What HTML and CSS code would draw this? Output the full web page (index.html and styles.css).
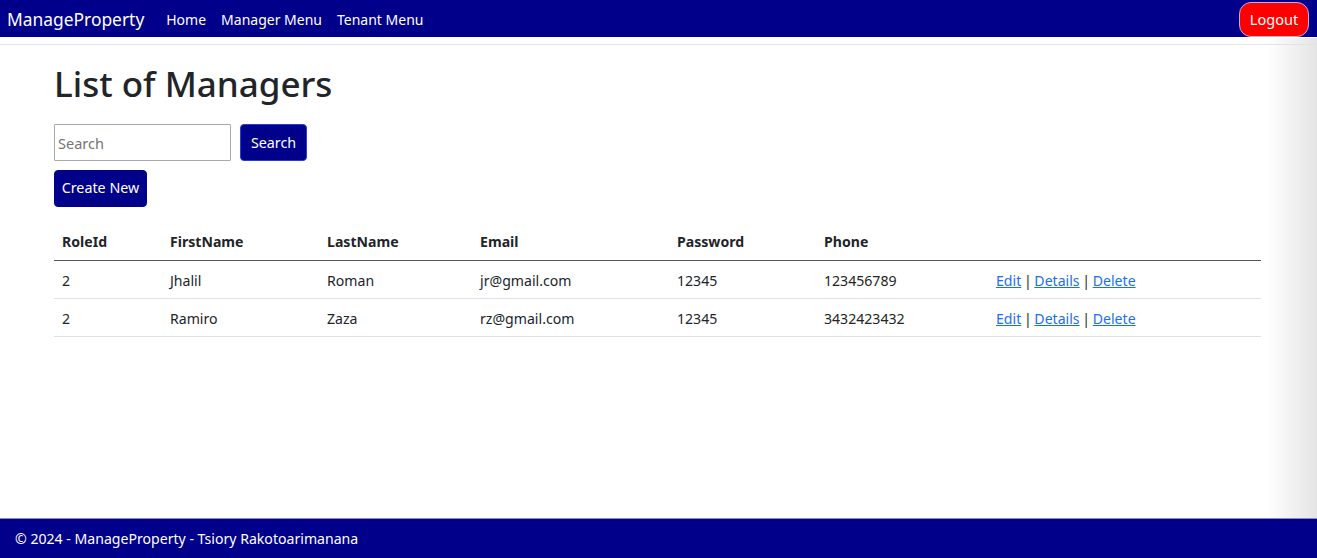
FILE: index.html
```html
<!DOCTYPE html>
<html lang="en">
<head>
<meta charset="utf-8">
<title>List of Managers - ManageProperty</title>
<link rel="stylesheet" href="styles.css">
</head>
<body>
<header class="site-header">
  <nav class="navbar">
    <a class="brand" href="#">ManageProperty</a>
    <ul class="nav-links">
      <li><a href="#">Home</a></li>
      <li><a href="#">Manager Menu</a></li>
      <li><a href="#">Tenant Menu</a></li>
    </ul>
    <button class="btn-logout" type="button">Logout</button>
  </nav>
</header>

<main class="container">
  <h1 class="title">List of Managers</h1>
  <form class="search-form">
    <input class="search-input" type="text" placeholder="Search">
    <button class="btn btn-search" type="button">Search</button>
  </form>
  <p class="create-row"><a class="btn btn-create" href="#">Create New</a></p>

  <table class="table">
    <thead>
      <tr>
        <th class="c-role">RoleId</th>
        <th class="c-first">FirstName</th>
        <th class="c-last">LastName</th>
        <th class="c-email">Email</th>
        <th class="c-pass">Password</th>
        <th class="c-phone">Phone</th>
        <th></th>
      </tr>
    </thead>
    <tbody>
      <tr>
        <td>2</td>
        <td>Jhalil</td>
        <td>Roman</td>
        <td>jr@gmail.com</td>
        <td>12345</td>
        <td>123456789</td>
        <td class="actions"><a href="#">Edit</a> | <a href="#">Details</a> | <a href="#">Delete</a></td>
      </tr>
      <tr>
        <td>2</td>
        <td>Ramiro</td>
        <td>Zaza</td>
        <td>rz@gmail.com</td>
        <td>12345</td>
        <td>3432423432</td>
        <td class="actions"><a href="#">Edit</a> | <a href="#">Details</a> | <a href="#">Delete</a></td>
      </tr>
    </tbody>
  </table>
</main>

<footer class="footer">
  &copy; 2024 - ManageProperty - Tsiory Rakotoarimanana
</footer>
<div class="edge-shadow"></div>
</body>
</html>
```

FILE: styles.css
```css
* { box-sizing: border-box; }

html, body {
  margin: 0;
  height: 100%;
}

body {
  font-family: "Noto Sans", "Open Sans", sans-serif;
  font-size: 14.1px;
  color: #212529;
  background: #fff;
  display: flex;
  flex-direction: column;
  min-height: 558px;
}

.site-header {
  border-bottom: 1px solid #e5e5e5;
  padding-bottom: 7px;
}

.navbar {
  height: 37px;
  background: #00008b;
  display: flex;
  align-items: center;
  padding: 1px 8px 0 7px;
}

.brand {
  color: #fff;
  text-decoration: none;
  font-size: 17.4px;
  margin-right: 22px;
}

.nav-links {
  list-style: none;
  display: flex;
  gap: 15px;
  margin: 0;
  padding: 0;
  flex: 1;
}

.nav-links a {
  color: #fff;
  text-decoration: none;
  font-size: 14px;
}

.btn-logout {
  background: #ff0000;
  color: #fff;
  border: 1px solid #b9b0e0;
  border-radius: 12px;
  height: 35px;
  width: 70px;
  font-family: inherit;
  font-size: 14.5px;
  padding: 0;
  margin-top: 0;
}

.container {
  flex: 1;
  padding: 0 56px 0 54px;
}

.title {
  font-size: 35px;
  font-weight: 500;
  margin: 18px 0 19px;
  line-height: 1.2;
}

.search-form {
  display: flex;
  gap: 9px;
  margin: 0;
}

.search-input {
  width: 177px;
  height: 37px;
  border: 1px solid #a9a9a9;
  border-radius: 1px;
  font-family: inherit;
  font-size: 14.5px;
  padding: 0 3px;
  color: #212529;
}

.search-input::placeholder { color: #757575; }

.btn {
  display: inline-flex;
  align-items: center;
  justify-content: center;
  background: #00008b;
  color: #fff;
  text-decoration: none;
  font-family: inherit;
  font-size: 14.3px;
  border-radius: 4px;
  height: 37px;
}

.btn-search {
  width: 67px;
  border: 1px solid #1e3fd8;
  padding: 0;
}

.create-row {
  margin: 9px 0 16px;
}

.btn-create {
  width: 93px;
  border: 1px solid #00008b;
  padding-bottom: 3px;
}

.table {
  width: 100%;
  border-collapse: collapse;
}

.table th,
.table td {
  text-align: left;
  padding: 0 8px;
  height: 38px;
  vertical-align: middle;
}

.table th {
  font-weight: 700;
  height: 37px;
  border-bottom: 1px solid #555;
  padding-top: 1px;
}

.table td {
  border-bottom: 1px solid #dee2e6;
  padding-top: 2px;
}

.c-role { width: 108px; }
.c-first { width: 157px; }
.c-last { width: 153px; }
.c-email { width: 197px; }
.c-pass { width: 147px; }
.c-phone { width: 172px; }

.table td.actions { word-spacing: -1px; }
.table a { color: #1a6ff0; word-spacing: 0; }

.footer {
  height: 40px;
  background: #00008b;
  border-top: 1px solid #8a8ac8;
  color: #fff;
  font-size: 14.1px;
  display: flex;
  align-items: center;
  padding: 0 15px;
}

.edge-shadow {
  position: fixed;
  top: 38px;
  right: 0;
  bottom: 40px;
  width: 50px;
  background: linear-gradient(to right, rgba(230,230,230,0), rgba(225,225,225,0.9));
  pointer-events: none;
}
```
